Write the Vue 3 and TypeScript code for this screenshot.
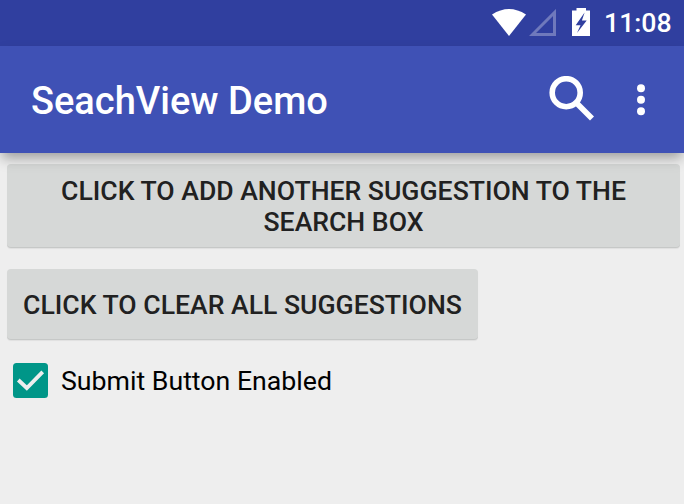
<script setup lang="ts">
import { ref } from 'vue'

const time = '11:08'
const title = 'SeachView Demo'
const submitEnabled = ref<boolean>(true)
</script>

<template>
  <main class="screen">
    <div class="status">
      <svg class="wifi" viewBox="0 0 34 27"><path d="M0 5.500Q17 -5.500 34 5.500L17 27Z" /></svg>
      <svg class="signal" viewBox="0 0 27 27"><path d="M25.500 3.500V25.500H3.500Z" /></svg>
      <svg class="battery" viewBox="0 0 18 28">
        <path d="M4.500 0H14V2.500H18V28H0V2.500H4.500Z" />
        <path class="bolt" d="M12.600 4.500L3.700 17.300H8.500L5 25L14.700 12.400H9.900Z" />
      </svg>
      <span class="time">{{ time }}</span>
    </div>
    <header class="toolbar">
      <h1>{{ title }}</h1>
      <svg class="search" viewBox="0 0 46 46">
        <circle cx="17.200" cy="16.700" r="14" /><path d="M27.500 27L43 42.500" />
      </svg>
      <svg class="more" viewBox="0 0 8 32">
        <circle cx="4" cy="4.200" r="4" /><circle cx="4" cy="15.800" r="4" /><circle cx="4" cy="27.300" r="4" />
      </svg>
    </header>
    <section class="content">
      <button class="btn add"><span>CLICK TO ADD ANOTHER SUGGESTION TO THE</span><span>SEARCH BOX</span></button>
      <button class="btn clear"><span>CLICK TO CLEAR ALL SUGGESTIONS</span></button>
      <label class="check">
        <input v-model="submitEnabled" type="checkbox" />
        <svg viewBox="0 0 35 35"><rect width="35" height="35" rx="3.500" /><path v-if="submitEnabled" d="M5.300 17L13.800 25L29.700 8.800" /></svg>
        <span>Submit Button Enabled</span>
      </label>
    </section>
  </main>
</template>

<style>
body { margin: 0; }
</style>
<style scoped>
.screen { width: 684px; height: 504px; background: #eee; font-family: Roboto, sans-serif; overflow: hidden; }
.status { height: 46px; box-sizing: border-box; background: #303f9f; display: flex; align-items: flex-start; padding: 8px 0 0 492px; color: #fff; }
.wifi { width: 34px; height: 27px; margin-top: 1px; fill: #fff; }
.signal { width: 27px; height: 27px; margin: 1px 0 0 3px; fill: none; stroke: #6f79bc; stroke-width: 3; }
.battery { width: 18px; height: 28px; margin-left: 16px; fill: #fff; }
.bolt { fill: #303f9f; }
.time { font-size: 26.700px; line-height: 30px; font-weight: 500; margin-left: 14px; white-space: nowrap; }
.toolbar { position: relative; height: 107px; box-sizing: border-box; background: #3f51b5; display: flex; align-items: center; padding: 0 39px 0 31px; color: #fff; box-shadow: 0 7px 12px -2px rgba(0,0,0,.34); }
h1 { margin: 2px auto 0 0; font-size: 38px; line-height: 46px; font-weight: 500; white-space: nowrap; }
.search { width: 46px; height: 46px; margin: -1px 42px 0 0; fill: none; stroke: #fff; stroke-width: 5.600; }
.more { width: 8px; height: 32px; fill: #fff; }
.content { display: flex; flex-direction: column; align-items: flex-start; padding: 11px 4px 0 7px; }
.btn { display: flex; flex-direction: column; align-items: center; justify-content: center; box-sizing: border-box; border: 0; padding: 0; border-radius: 4px; background: #d6d8d7; color: #212121; font: 500 26.600px/31px Roboto, sans-serif; box-shadow: inset 0 -1px 0 rgba(0,0,0,.07), 0 1px 1px rgba(0,0,0,.06); white-space: nowrap; }
.add { width: 673px; height: 84px; }
.clear { width: 471px; height: 71px; margin-top: 21px; }
.check { display: flex; align-items: flex-start; margin: 23px 0 0 6px; color: #000; font-size: 26.700px; line-height: 35px; }
.check input { position: absolute; opacity: 0; }
.check svg { width: 35px; height: 35px; margin-right: 13px; fill: #009688; }
.check span { padding-top: 1px; }
.check path { fill: none; stroke: #eee; stroke-width: 3.800; }
</style>
